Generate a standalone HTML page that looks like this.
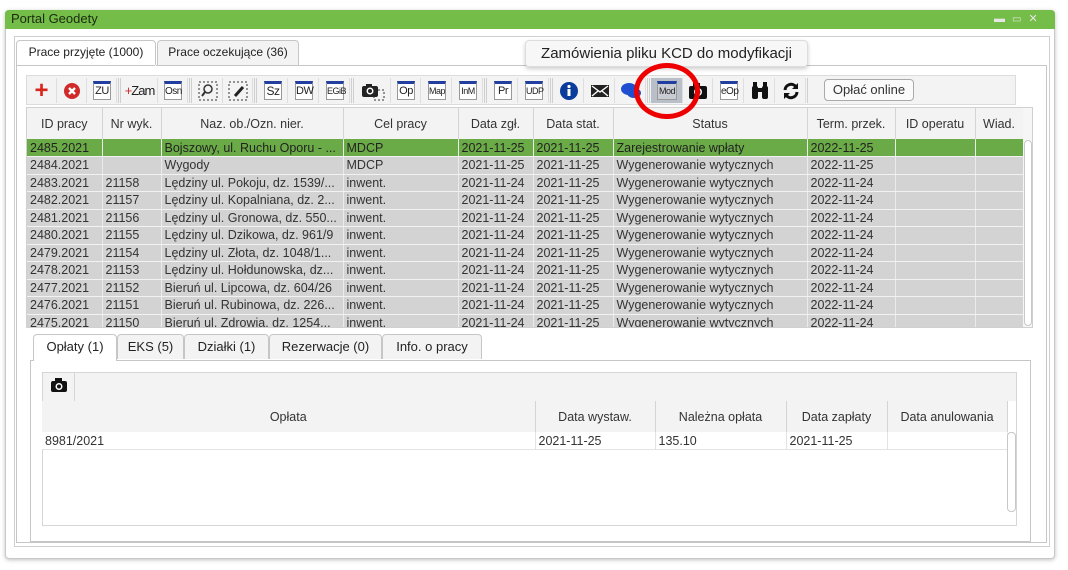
<!DOCTYPE html>
<html><head><meta charset="utf-8">
<style>
*{box-sizing:border-box;margin:0;padding:0}
body{width:1068px;height:570px;background:#fff;font-family:"Liberation Sans",sans-serif;font-size:12.5px;color:#222;position:relative;overflow:hidden}
.a{position:absolute}
.win{left:5px;top:10px;width:1050px;height:549px;border:1px solid #c8c8c8;border-radius:4px;background:#fff;box-shadow:0 1px 4px rgba(0,0,0,.25)}
.title{left:5px;top:10px;width:1050px;height:19px;background:#74bd48;border-radius:4px 4px 0 0;color:#1b2a10;font-size:13px;padding:1px 6px}
.tab{height:25px;border:1px solid #c6c6c6;border-bottom:none;background:#f3f3f3;border-radius:4px 4px 0 0;font-size:12px;text-align:center;line-height:23px;color:#222}
table{border-collapse:collapse;table-layout:fixed}
.g td{height:17.5px;padding:0 3px;white-space:nowrap;overflow:hidden;border-right:1px solid #ebebeb;border-bottom:1px solid #f2f2f2;line-height:16px;font-size:12.5px;color:#333}
.g tr{background:#d3d3d3}
.g tr.sel{background:#6bab47}
.g tr.sel td{color:#222}
.h td{border-right:1px solid #d4d4d4;text-align:center;font-size:12.5px;color:#333;background:#f3f3f3;white-space:nowrap}
.tb{left:26px;top:75px;width:990px;height:30px;background:#f3f3f3;border:1px solid #dcdcdc}
.btn{position:absolute;top:2px;width:30px;height:25px;border-right:1px solid #dedede;text-align:center;line-height:25px}
.sep{position:absolute;top:2px;width:3px;height:25px;border-left:1px solid #cfcfcf;border-right:1px solid #cfcfcf}
.doc{position:absolute;left:6px;top:3px;width:18px;height:19px;border:1px solid #999;border-top:3px solid #223fa0;background:#fff;font-size:11px;line-height:15px;color:#222;font-family:"Liberation Sans Narrow","Liberation Sans",sans-serif;letter-spacing:-.5px;text-align:center}
</style></head><body>
<div class="a win"></div>
<div class="a title">Portal Geodety</div>
<div class="a" style="left:994px;top:12px;font-size:11px;color:#e6e6e6;letter-spacing:7px">▬<span style="font-size:10px">▭</span>✕</div>
<div class="a" style="left:14px;top:36px;width:1036px;height:511px;border:1px solid #cfcfcf"></div>
<div class="a tab" style="left:16px;top:40px;width:140px;background:#fff;height:26px">Prace przyjęte (1000)</div>
<div class="a tab" style="left:157px;top:40px;width:142px">Prace oczekujące (36)</div>
<div class="a" style="left:16px;top:65px;width:1031px;height:478px;border:1px solid #c6c6c6;border-top-color:#c6c6c6"></div>
<div class="a" style="left:155px;top:65px;width:1px;height:1px;background:#fff"></div>

<div class="a tb">
 <div class="btn" style="left:0;color:#d8261c;font-size:24px;font-weight:bold">+</div>
 <div class="btn" style="left:30px"><svg width="16" height="16" style="margin-top:5px"><circle cx="8" cy="8" r="8" fill="#d02a2a"/><path d="M5 5l6 6M11 5l-6 6" stroke="#fff" stroke-width="2.4"/></svg></div>
 <div class="btn" style="left:60px"><div class="doc">ZU</div></div>
 <div class="sep" style="left:91px"></div>
 <div class="btn" style="left:95px;width:36px;font-size:13px;letter-spacing:-1px"><span style="color:#d02a2a">+</span>Zam</div>
 <div class="btn" style="left:131px"><div class="doc" style="font-size:10px">Osn</div></div>
 <div class="sep" style="left:162px"></div>
 <div class="btn" style="left:166px"><svg width="20" height="20" style="margin-top:3px"><rect x="1" y="1" width="18" height="18" fill="none" stroke="#333" stroke-dasharray="2 2"/><circle cx="10" cy="8" r="4" fill="none" stroke="#333" stroke-width="1.5"/><path d="M7 11l-3 4" stroke="#333" stroke-width="2"/></svg></div>
 <div class="btn" style="left:196px"><svg width="20" height="20" style="margin-top:3px"><rect x="1" y="1" width="18" height="18" fill="none" stroke="#333" stroke-dasharray="2 2"/><path d="M7 15l8-9" stroke="#222" stroke-width="3"/></svg></div>
 <div class="sep" style="left:227px"></div>
 <div class="btn" style="left:231px"><div class="doc" style="font-size:12px">Sz</div></div>
 <div class="btn" style="left:262px"><div class="doc">DW</div></div>
 <div class="btn" style="left:293px"><div class="doc" style="font-size:9px">EGiB</div></div>
 <div class="sep" style="left:324px"></div>
 <div class="btn" style="left:328px;width:36px"><svg width="26" height="20" style="margin-top:3px"><rect x="2" y="5" width="16" height="11" rx="2" fill="#222"/><rect x="6" y="3" width="6" height="3" fill="#222"/><circle cx="10" cy="10" r="3.5" fill="#fff"/><circle cx="10" cy="10" r="2" fill="#222"/><rect x="14" y="9" width="10" height="10" fill="none" stroke="#333" stroke-dasharray="2 2"/></svg></div>
 <div class="btn" style="left:364px"><div class="doc">Op</div></div>
 <div class="btn" style="left:395px"><div class="doc" style="font-size:9px">Map</div></div>
 <div class="btn" style="left:426px"><div class="doc" style="font-size:9px">InM</div></div>
 <div class="sep" style="left:457px"></div>
 <div class="btn" style="left:461px"><div class="doc">Pr</div></div>
 <div class="btn" style="left:492px"><div class="doc" style="font-size:9px">UDP</div></div>
 <div class="sep" style="left:523px"></div>
 <div class="btn" style="left:527px"><svg width="20" height="20" style="margin-top:3px"><circle cx="10" cy="10" r="9" fill="#0a3c9c"/><rect x="8.5" y="8" width="3" height="7" fill="#fff"/><circle cx="10" cy="5.5" r="1.6" fill="#fff"/></svg></div>
 <div class="btn" style="left:558px"><svg width="20" height="16" style="margin-top:5px"><rect x="1" y="2" width="18" height="12" fill="#222"/><path d="M2 3l8 6 8-6M2 13l6-5M18 13l-6-5" stroke="#fff" stroke-width="1.4" fill="none"/></svg></div>
 <div class="btn" style="left:589px"><svg width="22" height="20" style="margin-top:3px"><ellipse cx="9" cy="8" rx="8" ry="6" fill="#1f4fd0"/><ellipse cx="14" cy="12" rx="7" ry="5" fill="#1f4fd0"/></svg></div>
 <div class="sep" style="left:620px"></div>
 <div class="btn" style="left:624px;width:32px;background:#b9bfc9"><div class="doc" style="left:6px;width:20px;font-size:9px;background:#c9ccd3">Mod</div></div>
 <div class="btn" style="left:656px"><svg width="20" height="18" style="margin-top:4px"><rect x="1" y="4" width="18" height="13" rx="2" fill="#111"/><rect x="5" y="1" width="7" height="4" fill="#111"/><circle cx="10" cy="10" r="4" fill="#fff"/><circle cx="10" cy="10" r="2.5" fill="#111"/></svg></div>
 <div class="btn" style="left:687px"><div class="doc" style="font-size:10px">eOp</div></div>
 <div class="btn" style="left:718px"><svg width="20" height="20" style="margin-top:3px"><rect x="2" y="5" width="6" height="13" rx="2" fill="#111"/><rect x="12" y="5" width="6" height="13" rx="2" fill="#111"/><rect x="7" y="7" width="6" height="4" fill="#111"/><rect x="3" y="1" width="4" height="5" fill="#111"/><rect x="13" y="1" width="4" height="5" fill="#111"/></svg></div>
 <div class="btn" style="left:749px"><svg width="18" height="18" style="margin-top:4px"><path d="M3 8a6 6 0 0 1 11-3" stroke="#111" stroke-width="3" fill="none"/><path d="M15 10a6 6 0 0 1-11 3" stroke="#111" stroke-width="3" fill="none"/><path d="M16 1v6h-6z" fill="#111"/><path d="M2 17v-6h6z" fill="#111"/></svg></div>
 <div class="sep" style="left:780px;border-right:none"></div>
 <div class="a" style="left:797px;top:3px;width:90px;height:22px;border:1px solid #aaa;border-radius:4px;background:#fafafa;text-align:center;line-height:20px;font-size:13px;color:#333">Opłać online</div>
</div>

<!-- main grid -->
<div class="a" style="left:26px;top:107px;width:1007px;height:221px;border:1px solid #d0d0d0;overflow:hidden;background:#f6f6f6">
<table class="h" style="width:996px"><colgroup><col style="width:75px"><col style="width:59px"><col style="width:182px"><col style="width:115px"><col style="width:75px"><col style="width:80px"><col style="width:194px"><col style="width:88px"><col style="width:80px"><col style="width:48px"></colgroup>
<tr style="height:31px"><td>ID pracy</td><td>Nr wyk.</td><td>Naz. ob./Ozn. nier.</td><td>Cel pracy</td><td>Data zgł.</td><td>Data stat.</td><td>Status</td><td>Term. przek.</td><td>ID operatu</td><td>Wiad.</td></tr></table>
<table class="g" style="width:996px"><colgroup><col style="width:75px"><col style="width:59px"><col style="width:182px"><col style="width:115px"><col style="width:75px"><col style="width:80px"><col style="width:194px"><col style="width:88px"><col style="width:80px"><col style="width:48px"></colgroup>
<tr class="sel"><td>2485.2021</td><td></td><td>Bojszowy, ul. Ruchu Oporu - ...</td><td>MDCP</td><td>2021-11-25</td><td>2021-11-25</td><td>Zarejestrowanie wpłaty</td><td>2022-11-25</td><td></td><td></td></tr>
<tr><td>2484.2021</td><td></td><td>Wygody</td><td>MDCP</td><td>2021-11-25</td><td>2021-11-25</td><td>Wygenerowanie wytycznych</td><td>2022-11-25</td><td></td><td></td></tr>
<tr><td>2483.2021</td><td>21158</td><td>Lędziny ul. Pokoju, dz. 1539/...</td><td>inwent.</td><td>2021-11-24</td><td>2021-11-25</td><td>Wygenerowanie wytycznych</td><td>2022-11-24</td><td></td><td></td></tr>
<tr><td>2482.2021</td><td>21157</td><td>Lędziny ul. Kopalniana, dz. 2...</td><td>inwent.</td><td>2021-11-24</td><td>2021-11-25</td><td>Wygenerowanie wytycznych</td><td>2022-11-24</td><td></td><td></td></tr>
<tr><td>2481.2021</td><td>21156</td><td>Lędziny ul. Gronowa, dz. 550...</td><td>inwent.</td><td>2021-11-24</td><td>2021-11-25</td><td>Wygenerowanie wytycznych</td><td>2022-11-24</td><td></td><td></td></tr>
<tr><td>2480.2021</td><td>21155</td><td>Lędziny ul. Dzikowa, dz. 961/9</td><td>inwent.</td><td>2021-11-24</td><td>2021-11-25</td><td>Wygenerowanie wytycznych</td><td>2022-11-24</td><td></td><td></td></tr>
<tr><td>2479.2021</td><td>21154</td><td>Lędziny ul. Złota, dz. 1048/1...</td><td>inwent.</td><td>2021-11-24</td><td>2021-11-25</td><td>Wygenerowanie wytycznych</td><td>2022-11-24</td><td></td><td></td></tr>
<tr><td>2478.2021</td><td>21153</td><td>Lędziny ul. Hołdunowska, dz...</td><td>inwent.</td><td>2021-11-24</td><td>2021-11-25</td><td>Wygenerowanie wytycznych</td><td>2022-11-24</td><td></td><td></td></tr>
<tr><td>2477.2021</td><td>21152</td><td>Bieruń ul. Lipcowa, dz. 604/26</td><td>inwent.</td><td>2021-11-24</td><td>2021-11-25</td><td>Wygenerowanie wytycznych</td><td>2022-11-24</td><td></td><td></td></tr>
<tr><td>2476.2021</td><td>21151</td><td>Bieruń ul. Rubinowa, dz. 226...</td><td>inwent.</td><td>2021-11-24</td><td>2021-11-25</td><td>Wygenerowanie wytycznych</td><td>2022-11-24</td><td></td><td></td></tr>
<tr><td>2475.2021</td><td>21150</td><td>Bieruń ul. Zdrowia, dz. 1254...</td><td>inwent.</td><td>2021-11-24</td><td>2021-11-25</td><td>Wygenerowanie wytycznych</td><td>2022-11-24</td><td></td><td></td></tr>
</table>
<div class="a" style="left:996px;top:0;width:11px;height:221px;background:#f6f6f6"></div>
<div class="a" style="left:997px;top:32px;width:8px;height:186px;border:1px solid #c8c8c8;border-radius:4px;background:#fff"></div>
</div>

<!-- bottom tabs -->
<div class="a tab" style="left:33px;top:334px;width:84px;height:27px;background:#fff;font-size:13px">Opłaty (1)</div>
<div class="a tab" style="left:117px;top:334px;width:67px;font-size:13px">EKS (5)</div>
<div class="a tab" style="left:184px;top:334px;width:85px;font-size:13px">Działki (1)</div>
<div class="a tab" style="left:269px;top:334px;width:113px;font-size:13px">Rezerwacje (0)</div>
<div class="a tab" style="left:382px;top:334px;width:100px;font-size:13px">Info. o pracy</div>
<div class="a" style="left:30px;top:360px;width:1001px;height:182px;border:1px solid #c6c6c6"></div>
<div class="a" style="left:34px;top:360px;width:82px;height:1px;background:#fff"></div>

<div class="a" style="left:42px;top:372px;width:975px;height:30px;background:#f3f3f3;border:1px solid #d6d6d6"></div>
<div class="a" style="left:42px;top:372px;width:33px;height:30px;border-right:1px solid #d6d6d6;padding:6px 0 0 9px"><svg width="16" height="14"><rect x="0" y="3" width="16" height="11" rx="2" fill="#111"/><rect x="4" y="0" width="7" height="4" fill="#111"/><circle cx="8" cy="8.5" r="3.5" fill="#fff"/><circle cx="8" cy="8.5" r="2" fill="#111"/></svg></div>
<div class="a" style="left:42px;top:401px;width:975px;height:125px;border:1px solid #d6d6d6;border-top:none;background:#fff"></div>
<table class="a h" style="left:42px;top:401px;width:965px"><colgroup><col style="width:493px"><col style="width:120px"><col style="width:131px"><col style="width:101px"><col style="width:120px"></colgroup>
<tr style="height:31px"><td>Opłata</td><td>Data wystaw.</td><td>Należna opłata</td><td>Data zapłaty</td><td>Data anulowania</td></tr></table>
<table class="a g" style="left:42px;top:432px;width:965px"><colgroup><col style="width:493px"><col style="width:120px"><col style="width:131px"><col style="width:101px"><col style="width:120px"></colgroup>
<tr style="background:#fff"><td style="border-right-color:#e3e3e3;border-bottom-color:#e3e3e3">8981/2021</td><td style="border-right-color:#e3e3e3;border-bottom-color:#e3e3e3">2021-11-25</td><td style="border-right-color:#e3e3e3;border-bottom-color:#e3e3e3">135.10</td><td style="border-right-color:#e3e3e3;border-bottom-color:#e3e3e3">2021-11-25</td><td style="border-bottom-color:#e3e3e3"></td></tr></table>
<div class="a" style="left:1007px;top:432px;width:9px;height:80px;border:1px solid #c8c8c8;border-radius:4px;background:#fff"></div>

<!-- tooltip -->
<div class="a" style="left:525px;top:40px;width:283px;height:27px;background:#f7f7f7;border:1px solid #ddd;border-radius:4px;box-shadow:0 2px 4px rgba(0,0,0,.2);font-size:15px;line-height:25px;text-align:center;color:#222">Zamówienia pliku KCD do modyfikacji</div>
<!-- red circle -->
<div class="a" style="left:634px;top:63px;width:66px;height:56px;border:5px solid #e00;border-radius:50%"></div>
</body></html>
